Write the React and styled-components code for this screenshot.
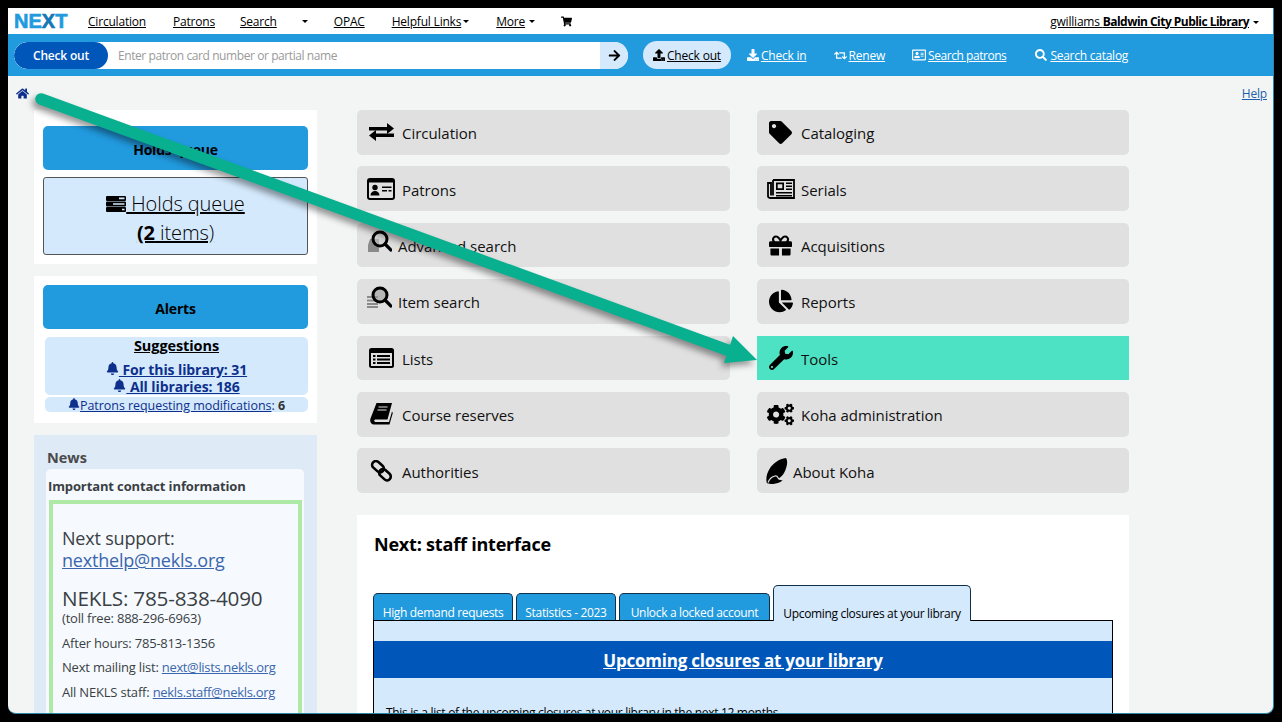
import React from 'react'
import styled, { createGlobalStyle } from 'styled-components'
import {
  FaArrowRight,
  FaBell,
  FaChartPie,
  FaCogs,
  FaDownload,
  FaGift,
  FaHome,
  FaRegAddressCard,
  FaRetweet,
  FaSearch,
  FaShoppingCart,
  FaTag,
  FaUpload,
  FaWrench
} from 'react-icons/fa'

const GlobalStyle = createGlobalStyle`
  html, body {
    margin: 0;
    padding: 0;
    background: #000;
  }
  body {
    font-family: "Open Sans", "Noto Sans", sans-serif;
  }
  * {
    box-sizing: border-box;
  }
`

const Frame = styled.div`
  position: relative;
  width: 1266px;
  height: 706px;
  margin: 8px;
  overflow: hidden;
  background: #f3f5f4;
  border-bottom: 1px solid #2b86a8;
  border-right: 1px solid #2b86a8;
  border-radius: 0 0 8px 8px;
`

const TopNav = styled.nav`
  display: flex;
  align-items: center;
  height: 26px;
  padding: 0 14px 0 6px;
  background: #fff;
  font-size: 12px;
  letter-spacing: -0.2px;
`

const Logo = styled.span`
  width: 55px;
  margin-right: 19px;
  font-family: "Liberation Sans", sans-serif;
  font-size: 20px;
  font-weight: 700;
  letter-spacing: 0;
  color: #219ade;
  -webkit-text-stroke: 0.6px currentColor;
`

const LogoDark = styled.span`
  color: #1577b5;
`

const NavLink = styled.a`
  margin-right: ${props => props.$gap}px;
  color: #000;
  text-decoration: underline;
  white-space: nowrap;
  b {
    letter-spacing: -0.53px;
  }
`

const Caret = styled.span`
  display: inline-block;
  width: 0;
  height: 0;
  margin-left: ${props => props.$left || 2}px;
  margin-right: ${props => props.$right || 0}px;
  vertical-align: middle;
  border-top: 3px solid #000;
  border-left: 3px solid transparent;
  border-right: 3px solid transparent;
`

const UserMenu = styled.div`
  margin-left: auto;
  white-space: nowrap;
`

const SearchBar = styled.div`
  display: flex;
  align-items: center;
  height: 42px;
  padding: 0 5px 0 6px;
  background: #219ade;
  font-size: 12px;
  letter-spacing: -0.2px;
`

const SearchForm = styled.div`
  display: flex;
  align-items: center;
  width: 614px;
  height: 27px;
  border-radius: 14px;
  background: #fff;
  overflow: hidden;
`

const SearchLabel = styled.span`
  display: flex;
  align-items: center;
  justify-content: center;
  width: 94px;
  height: 100%;
  border-radius: 14px;
  background: #0157b9;
  color: #fff;
  font-weight: 600;
`

const SearchHint = styled.span`
  flex: 1;
  padding-left: 10px;
  letter-spacing: -0.42px;
  color: #9a9a9a;
`

const SearchGo = styled.span`
  display: flex;
  align-items: center;
  justify-content: center;
  width: 28px;
  height: 100%;
  background: #d4e9fc;
  font-size: 13px;
`

const ToolLink = styled.a`
  display: flex;
  align-items: center;
  height: ${props => (props.$active ? 28 : 27)}px;
  margin-left: ${props => props.$left}px;
  padding: ${props => (props.$active ? '0 10px' : '0')};
  border-radius: 14px;
  background: ${props => (props.$active ? '#d4e9fc' : 'transparent')};
  color: ${props => (props.$active ? '#000' : '#fff')};
  letter-spacing: ${props => props.$spacing || -0.2}px;
  text-decoration: underline;
  white-space: nowrap;
  svg {
    margin-right: ${props => props.$iconGap || 2}px;
    font-size: ${props => props.$icon || 12}px;
  }
`

const Breadcrumb = styled.div`
  display: flex;
  justify-content: space-between;
  align-items: center;
  height: 34px;
  padding: 0 6px 0 8px;
  font-size: 12px;
  letter-spacing: -0.2px;
  color: #0e2f8c;
`

const HelpLink = styled.a`
  color: #1d5fa8;
  text-decoration: underline;
`

const Columns = styled.div`
  display: grid;
  grid-template-columns: 283px 772px;
  column-gap: 40px;
  padding-left: 26px;
  align-items: start;
`

const Sidebar = styled.aside`
  display: flex;
  flex-direction: column;
  gap: 12px;
`

const Card = styled.section`
  height: ${props => props.$height}px;
  padding: ${props => props.$pad}px 9px 0;
  background: #fff;
`

const CardTitle = styled.div`
  display: flex;
  align-items: center;
  justify-content: center;
  height: 44px;
  padding-top: 2px;
  border-radius: 5px;
  background: #219ade;
  font-size: 14px;
  font-weight: 700;
  letter-spacing: -0.2px;
  color: #000;
`

const QueueBox = styled.a`
  display: block;
  height: 78px;
  margin-top: 7px;
  padding-top: 11px;
  border: 1px solid #555;
  border-radius: 3px;
  background: #d4e9fc;
  color: #000;
  font-size: 20px;
  font-weight: 300;
  line-height: 29px;
  letter-spacing: -0.1px;
  text-align: center;
  text-decoration: underline;
  b {
    font-weight: 700;
  }
  svg {
    vertical-align: -1px;
  }
`

const AlertBox = styled.div`
  margin: ${props => props.$top}px 0 0 2px;
  height: ${props => props.$height}px;
  padding-top: ${props => props.$inset || 0}px;
  border-radius: 5px;
  background: #d4e9fc;
  text-align: center;
  color: #0e2f8c;
  font-size: ${props => props.$size}px;
  line-height: ${props => props.$line}px;
  letter-spacing: ${props => props.$spacing}px;
`

const AlertHeading = styled.a`
  display: block;
  margin-bottom: 6px;
  font-size: 14.5px;
  line-height: 18px;
  font-weight: 700;
  color: #000;
  text-decoration: underline;
`

const AlertLink = styled.a`
  display: block;
  font-weight: 700;
  text-decoration: underline;
`

const PlainLink = styled.a`
  font-weight: 400;
  text-decoration: underline;
`

const AlertCount = styled.b`
  color: #333;
`

const NewsPanel = styled.section`
  height: 300px;
  padding: 13px 13px 0 12px;
  background: #dfeaf7;
  color: #3a3f44;
`

const NewsHeading = styled.h3`
  margin: 0 0 1px 1px;
  font-size: 14.5px;
  line-height: 20px;
  font-weight: 700;
  color: #4a4a4a;
`

const NewsBody = styled.div`
  height: 300px;
  padding: 0 2px 0 3px;
  border-radius: 5px 5px 0 0;
  background: #f6fafe;
`

const NewsTitle = styled.div`
  margin-left: -1px;
  padding: 8px 0 5px;
  font-size: 13px;
  line-height: 18px;
  font-weight: 700;
  letter-spacing: -0.12px;
`

const ContactBox = styled.div`
  height: 300px;
  padding: 23px 9px;
  border: 4px solid #aeeaa6;
`

const ContactLine = styled.p`
  margin: 0 0 ${props => props.$after}px;
  font-size: ${props => props.$size}px;
  line-height: ${props => props.$line}px;
  letter-spacing: -0.2px;
  white-space: nowrap;
`

const ContactLink = styled.a`
  color: #3a66ad;
  text-decoration: underline;
  letter-spacing: ${props => props.$spacing || -0.2}px;
`

const MainColumn = styled.main`
  display: flex;
  flex-direction: column;
`

const MenuGrid = styled.div`
  display: grid;
  grid-template-columns: 373px 372px;
  grid-auto-rows: 44.7px;
  column-gap: 27px;
  row-gap: 11.7px;
`

const MenuButton = styled.a`
  display: flex;
  align-items: center;
  padding-top: 2px;
  border-radius: ${props => (props.$hot ? 0 : 5)}px;
  background: ${props => (props.$hot ? '#4de2c3' : '#e0e0e0')};
  color: #111;
  font-size: 15px;
  letter-spacing: -0.03px;
`

const MenuIcon = styled.span`
  display: flex;
  align-items: center;
  justify-content: center;
  flex: none;
  width: ${props => props.$width || 45}px;
  padding-left: 3px;
  color: #000;
  transform: translateY(${props => props.$up || -1}px);
`

const ContentPanel = styled.section`
  height: 300px;
  margin-top: 22px;
  padding: 0 16px;
  background: #fff;
`

const PageTitle = styled.h1`
  margin: 0;
  padding: 17px 0 0 1px;
  height: 70px;
  font-size: 18px;
  line-height: 24px;
  font-weight: 700;
  letter-spacing: -0.2px;
  color: #000;
`

const TabRow = styled.div`
  display: flex;
  align-items: flex-end;
  gap: 3px;
  height: 35px;
`

const Tab = styled.a`
  display: flex;
  align-items: center;
  justify-content: center;
  width: ${props => props.$width}px;
  height: ${props => (props.$active ? 36 : 27)}px;
  padding-top: ${props => (props.$active ? 20 : 12)}px;
  margin-bottom: ${props => (props.$active ? -1 : 0)}px;
  border: 1px solid #10304a;
  border-bottom: none;
  border-radius: 5px 5px 0 0;
  background: ${props => (props.$active ? '#d4e9fc' : '#219ade')};
  color: ${props => (props.$active ? '#000' : '#fff')};
  font-size: 12px;
  letter-spacing: -0.33px;
  white-space: nowrap;
  position: relative;
`

const TabPanel = styled.div`
  height: 300px;
  padding-top: 20px;
  border: 1px solid #000;
  background: #d4e9fc;
`

const PanelHeading = styled.a`
  display: block;
  height: 37px;
  background: #0157b9;
  color: #fff;
  font-size: 17px;
  font-weight: 700;
  line-height: 39px;
  letter-spacing: -0.22px;
  text-align: center;
  text-decoration: underline;
`

const PanelText = styled.p`
  margin: 27px 0 0 12px;
  font-size: 12px;
  line-height: 16px;
  letter-spacing: -0.3px;
  color: #000;
`

const ArrowLayer = styled.svg`
  position: absolute;
  left: 0;
  top: 0;
  pointer-events: none;
  filter: drop-shadow(-3px 4px 3px rgba(0, 0, 0, 0.4));
`

const QueueIcon = () => (
  <svg width="20" height="16" viewBox="0 0 20 16">
    <path d="M1 0h18a1 1 0 0 1 1 1v3a1 1 0 0 1-1 1H1a1 1 0 0 1-1-1V1a1 1 0 0 1 1-1zM1 5.5h18a1 1 0 0 1 1 1v3a1 1 0 0 1-1 1H1a1 1 0 0 1-1-1v-3a1 1 0 0 1 1-1zM1 11h18a1 1 0 0 1 1 1v3a1 1 0 0 1-1 1H1a1 1 0 0 1-1-1v-3a1 1 0 0 1 1-1z" />
    <path fill="#d4e9fc" d="M13 1.6h5.500v1.600H13zM7 7.200h11.500v1.600H7zM16 12.700h2.500v1.600H16z" />
  </svg>
)

const ExchangeIcon = () => (
  <svg width="25" height="18" viewBox="0 0 25 18">
    <path d="M0 4h18V0l7 5.500-7 5.500V7.500H0zM25 10.500H7V7l-7 5.500L7 18v-4h18z" />
  </svg>
)

const PatronCardIcon = () => (
  <svg width="28" height="22" viewBox="0 0 28 22">
    <rect x="1" y="1" width="26" height="20" rx="2" fill="none" stroke="#000" strokeWidth="2" />
    <rect x="1" y="1" width="26" height="3.500" />
    <circle cx="8" cy="9.500" r="2.700" />
    <path d="M3.500 17.500c0-3 2-4.500 4.500-4.500s4.500 1.500 4.500 4.500zM15 8.500h9.500v1.500H15zM15 12h5v1.500h-5zM21.500 12h3v1.500h-3z" />
  </svg>
)

const RecordSearchIcon = ({ stacked }) => (
  <svg width="26" height="24" viewBox="0 0 26 24">
    {stacked ? (
      <path fill="#8a8a8a" d="M1 10h11v2H1zM1 13.500h11v2H1zM1 17h11v2H1zM1 20h11v2H1z" />
    ) : (
      <path fill="#8a8a8a" d="M2 15l2-6h9v13H2z" />
    )}
    <circle cx="14" cy="9" r="7" fill={stacked ? '#9a9a9a' : '#c9c9c9'} fillOpacity="0.6" stroke="#000" strokeWidth="3" />
    <path d="M19 14l6 6" stroke="#000" strokeWidth="3.200" strokeLinecap="round" />
  </svg>
)

const ListIcon = () => (
  <svg width="25" height="20" viewBox="0 0 25 20">
    <rect x="0" y="0" width="25" height="20" rx="2.500" />
    <rect x="2" y="5" width="21" height="13" fill="#e0e0e0" />
    <path d="M4 7h2.500v2H4zM8 7h13v2H8zM4 10.500h2.500v2H4zM8 10.500h13v2H8zM4 14h2.500v2H4zM8 14h13v2H8z" />
  </svg>
)

const BookIcon = () => (
  <svg width="23" height="22" viewBox="0 0 23 22">
    <path d="M6.500 0H22l-4.500 16.500H5.500c-1.500 0-1.800 2.500 0 2.500H19l3-10.500.8 1.500-3.300 11.500H4c-3 0-4.500-2.500-3.500-6z" />
    <path d="M8.500 4h9M7.500 7h9" stroke="#e0e0e0" strokeWidth="1.200" />
  </svg>
)

const ChainIcon = () => (
  <svg width="23" height="22" viewBox="0 0 23 22" fill="none" stroke="#000" strokeWidth="2.600">
    <rect x="1.500" y="3" width="13" height="7.500" rx="3.700" transform="rotate(42 8 6.700)" />
    <rect x="8.500" y="11" width="13" height="7.500" rx="3.700" transform="rotate(42 15 14.700)" />
  </svg>
)

const NewspaperIcon = () => (
  <svg width="28" height="20" viewBox="0 0 28 20">
    <path
      fill="none"
      stroke="#000"
      strokeWidth="1.800"
      d="M6 1h21v18H3c-1.200 0-2-.8-2-2V4h3v12.500M6 1v15.500"
    />
    <path d="M9 3.500h8v7.500H9zM19 3.500h6v1.500h-6zM19 6.500h6V8h-6zM19 9.500h6V11h-6zM9 13h16v1.500H9zM9 16h16v1.500H9z" />
    <path fill="#e0e0e0" d="M10.700 5.200h4.600v4.100h-4.600z" />
  </svg>
)

const KohaIcon = () => (
  <svg width="22" height="26" viewBox="0 0 22 26">
    <path d="M20 0c-7 1-13 5-16.500 11C.8 15.500-.3 20 .8 25c1.500 1 6 1.500 9 .5 3-.5 5.500-1.500 7-3.500-2 .5-3.500 0-4-1.500 2-1.500 4-3 5.500-6C20.500 10 22.500 4 20 0z" />
    <path
      d="M2 24.500c1.500-3.500 4-6 7-6.500 1.500-.2 2.500.5 3 1.800.4 1.200 1.500 1.800 3 1.700"
      fill="none"
      stroke="#e0e0e0"
      strokeWidth="1.200"
    />
  </svg>
)

const leftMenu = [
  { label: 'Circulation', icon: <ExchangeIcon /> },
  { label: 'Patrons', icon: <PatronCardIcon /> },
  { label: 'Advanced search', icon: <RecordSearchIcon />, width: 41, up: -4 },
  { label: 'Item search', icon: <RecordSearchIcon stacked />, width: 41, up: -4 },
  { label: 'Lists', icon: <ListIcon /> },
  { label: 'Course reserves', icon: <BookIcon /> },
  { label: 'Authorities', icon: <ChainIcon /> }
]

const rightMenu = [
  { label: 'Cataloging', icon: <FaTag size={23} />, width: 44 },
  { label: 'Serials', icon: <NewspaperIcon />, width: 44 },
  { label: 'Acquisitions', icon: <FaGift size={23} />, width: 44 },
  { label: 'Reports', icon: <FaChartPie size={24} />, width: 44 },
  { label: 'Tools', icon: <FaWrench size={24} />, width: 44, hot: true },
  { label: 'Koha administration', icon: <FaCogs size={27} />, width: 44 },
  { label: 'About Koha', icon: <KohaIcon />, width: 36 }
]

const menuItems = leftMenu.flatMap((item, index) => [item, rightMenu[index]])

const tabs = [
  { label: 'High demand requests', width: 140 },
  { label: 'Statistics - 2023', width: 100 },
  { label: 'Unlock a locked account', width: 151 },
  { label: 'Upcoming closures at your library', width: 198, active: true }
]

const App = () => (
  <>
    <GlobalStyle />
    <Frame>
      <TopNav>
        <Logo>
          NE<LogoDark>X</LogoDark>T
        </Logo>
        <NavLink $gap={27}>Circulation</NavLink>
        <NavLink $gap={25}>Patrons</NavLink>
        <NavLink $gap={23}>Search</NavLink>
        <Caret $right={26} />
        <NavLink $gap={27}>OPAC</NavLink>
        <NavLink $gap={0}>Helpful Links</NavLink>
        <Caret $left={0} $right={27} />
        <NavLink $gap={0}>More </NavLink>
        <Caret $left={4} $right={26} />
        <FaShoppingCart size={11} />
        <UserMenu>
          <NavLink $gap={0}>
            gwilliams <b>Baldwin City Public Library</b>
          </NavLink>
          <Caret $left={4} />
        </UserMenu>
      </TopNav>
      <SearchBar>
        <SearchForm>
          <SearchLabel>Check out</SearchLabel>
          <SearchHint>Enter patron card number or partial name</SearchHint>
          <SearchGo>
            <FaArrowRight />
          </SearchGo>
        </SearchForm>
        <ToolLink $active $left={15}>
          <FaUpload />
          Check out
        </ToolLink>
        <ToolLink $left={16}>
          <FaDownload />
          Check in
        </ToolLink>
        <ToolLink $left={27} $icon={13}>
          <FaRetweet />
          Renew
        </ToolLink>
        <ToolLink $left={27} $icon={14} $spacing={-0.45}>
          <FaRegAddressCard />
          Search patrons
        </ToolLink>
        <ToolLink $left={29} $iconGap={3} $spacing={-0.25}>
          <FaSearch />
          Search catalog
        </ToolLink>
      </SearchBar>
      <Breadcrumb>
        <FaHome size={13} />
        <HelpLink>Help</HelpLink>
      </Breadcrumb>
      <Columns>
        <Sidebar>
          <Card $height={154} $pad={16}>
            <CardTitle>Holds queue</CardTitle>
            <QueueBox>
              <QueueIcon /> Holds queue
              <br />
              <b>(2</b> items)
            </QueueBox>
          </Card>
          <Card $height={147} $pad={9}>
            <CardTitle>Alerts</CardTitle>
            <AlertBox $top={8} $height={58} $size={14} $line={17} $spacing={-0.1}>
              <AlertHeading>Suggestions</AlertHeading>
              <AlertLink>
                <FaBell size={13} /> For this library: 31
              </AlertLink>
              <AlertLink>
                <FaBell size={13} /> All libraries: 186
              </AlertLink>
            </AlertBox>
            <AlertBox $top={2} $height={15} $inset={1} $size={12.5} $line={15} $spacing={-0.05}>
              <FaBell size={12} />
              <PlainLink>Patrons requesting modifications</PlainLink>: <AlertCount>6</AlertCount>
            </AlertBox>
          </Card>
          <NewsPanel>
            <NewsHeading>News</NewsHeading>
            <NewsBody>
              <NewsTitle>Important contact information</NewsTitle>
              <ContactBox>
                <ContactLine $size={18} $line={22} $after={15}>
                  Next support:
                  <br />
                  <ContactLink>nexthelp@nekls.org</ContactLink>
                </ContactLine>
                <ContactLine $size={20.7} $line={24} $after={1}>
                  NEKLS: 785-838-4090
                </ContactLine>
                <ContactLine $size={13} $line={15} $after={10}>
                  (toll free: 888-296-6963)
                </ContactLine>
                <ContactLine $size={13} $line={15} $after={9}>
                  After hours: 785-813-1356
                </ContactLine>
                <ContactLine $size={13} $line={15} $after={10}>
                  Next mailing list: <ContactLink $spacing={-0.35}>next@lists.nekls.org</ContactLink>
                </ContactLine>
                <ContactLine $size={13} $line={15} $after={10}>
                  All NEKLS staff: <ContactLink $spacing={-0.3}>nekls.staff@nekls.org</ContactLink>
                </ContactLine>
              </ContactBox>
            </NewsBody>
          </NewsPanel>
        </Sidebar>
        <MainColumn>
          <MenuGrid>
            {menuItems.map(item => (
              <MenuButton key={item.label} $hot={item.hot}>
                <MenuIcon $width={item.width} $up={item.up}>
                  {item.icon}
                </MenuIcon>
                {item.label}
              </MenuButton>
            ))}
          </MenuGrid>
          <ContentPanel>
            <PageTitle>Next: staff interface</PageTitle>
            <TabRow>
              {tabs.map(tab => (
                <Tab key={tab.label} $width={tab.width} $active={tab.active}>
                  {tab.label}
                </Tab>
              ))}
            </TabRow>
            <TabPanel>
              <PanelHeading>Upcoming closures at your library</PanelHeading>
              <PanelText>This is a list of the upcoming closures at your library in the next 12 months.</PanelText>
            </TabPanel>
          </ContentPanel>
        </MainColumn>
      </Columns>
      <ArrowLayer width="1266" height="706" viewBox="0 0 1266 706">
        <path
          d="M33 91L722 343"
          stroke="#08b08f"
          strokeWidth="11.500"
          strokeLinecap="round"
          fill="none"
        />
        <path d="M725 328L749 352L716 355Z" fill="#08b08f" />
      </ArrowLayer>
    </Frame>
  </>
)

export default App
